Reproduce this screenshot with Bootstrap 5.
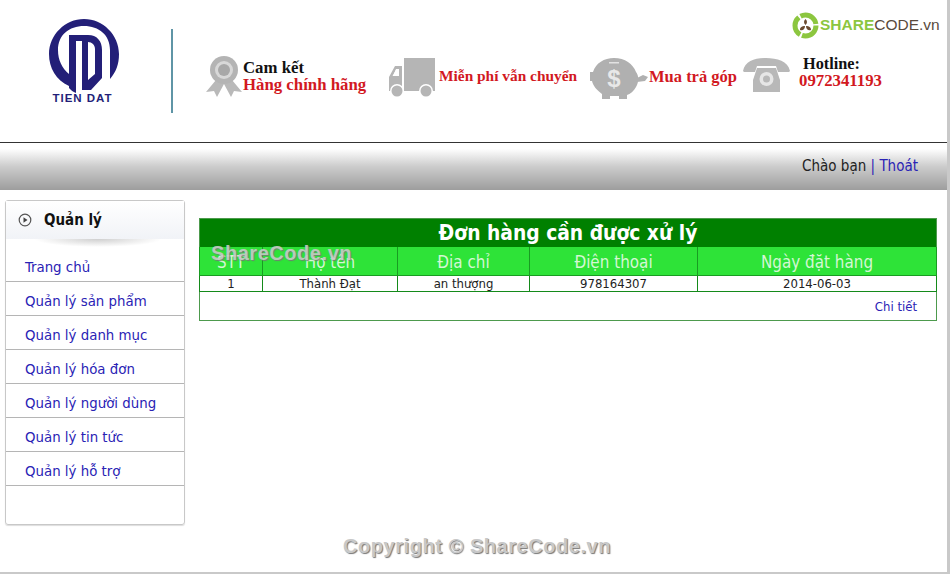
<!DOCTYPE html>
<html lang="vi">
<head>
<meta charset="utf-8">
<title>Đơn hàng cần được xử lý</title>
<link rel="stylesheet" href="https://cdn.jsdelivr.net/npm/bootstrap@5.3.0/dist/css/bootstrap.min.css">
<style>
html,body{height:100%;overflow:hidden}
body{background:#fff;font-family:"DejaVu Sans Condensed","DejaVu Sans",sans-serif;font-size:14px;color:#222}
.pg{width:950px;height:574px;position:relative;border-right:3px solid #c9c9c9;border-bottom:2px solid #c9c9c9}
.top{height:143px;border-bottom:1px solid #333;padding:18px 0 0 48px}
.lg{width:72px;height:87px;flex:none}
.dv{width:2px;height:84px;background:#5f95a6;margin:11px 0 0 51px;flex:none}
.ft{font-family:"Liberation Serif",serif;font-weight:700;color:#d2191f;font-size:15.4px;line-height:17px;white-space:nowrap}
.bl{color:#111}
.ft1{margin:37px 0 0 32px;width:162px;height:43px}
.ft2{margin:39px 0 0 21px;width:189px;height:37px}
.ft3{margin:39px 0 0 13px;width:153px;height:39px;font-size:16.5px}
.ft4{margin:40px 0 0 0;height:36px}
.i1{width:38px;height:43px;flex:none}.i2{width:47px;height:41px;flex:none;margin:0 4px -4px 0;align-self:flex-start}.i3{width:58px;height:43px;flex:none;margin-right:1px;align-self:flex-start}.i4{width:47px;height:34px;flex:none;margin-right:9px}
.big{font-size:16.8px}
.hl{font-size:16.3px;margin:-3px 0 0 4px}
.strip{height:47px;background:linear-gradient(#fff 0,#fff 12%,#ccc 50%,#9d9d9d 100%);padding-right:29px;font-size:15px;color:#222}
.strip a,.side a,.more{color:#2a23b5;text-decoration:none}
.main{padding:10px 9px 0 5px;gap:14px}
.side{width:180px;height:325px;flex:none;border:1px solid #c8c8c8;border-radius:3px;box-shadow:0 1px 1px #ddd}
.shead{height:38px;background:linear-gradient(#fff,#f1f3f7);padding-left:12px;gap:12px;font-weight:700;font-size:15px;color:#111;position:relative}
.shead::after{content:"";position:absolute;left:28px;right:22px;top:38px;height:8px;background:radial-gradient(ellipse at top,#cfcfcf,rgba(255,255,255,0) 70%)}
.side a.it{display:flex;align-items:flex-end;height:34px;padding:0 0 5px 19px;border-bottom:1px solid #b5b5b5;font-size:14.85px;line-height:18px}
.side a.first{height:43px;padding-bottom:5px}
.cnt{flex:1;padding-top:18px}
.tb{width:738px;border-collapse:collapse;border:1px solid #4d9a4d;margin:0;text-align:center;table-layout:fixed}
.tb .h1 th{background:#008000;color:#fff;font-size:20.8px;font-weight:700;height:28px;padding:0;line-height:28px}
.tb .h2 th{background:#2ee338;color:#d4f7d4;font-size:16.9px;font-weight:400;height:28px;padding:2px 0 0;border:1px solid #199c22;border-top:0;line-height:26px}
.tb td{height:16px;padding:0;font-size:13px;line-height:15px;border:1px solid #148a1a;color:#222}
.tb td.ftr{height:29px;border:0;border-top:1px solid #4d9a4d;text-align:right;padding:0 19px 0 0;font-size:13px}
.wm,.cr{position:absolute;font-family:"Liberation Sans",sans-serif;font-weight:700;font-size:20px;letter-spacing:.55px;line-height:24px;color:#c8c8c8;text-shadow:1px 1px 1px #777}
.wm{left:211px;top:241px;opacity:.9}
.cr{left:343px;top:534px}
.sc{position:absolute;left:792px;top:11px;gap:1px;font-family:"Liberation Sans",sans-serif;font-size:15.500px;line-height:28px}
.sc b{color:#8cc63f;font-weight:700}.sc span{color:#5a4a3c;font-weight:400}
.camket{margin-top:4px}
</style>
</head>
<body>
<div class="pg">
  <header class="top d-flex align-items-start">
    <svg class="lg" viewBox="0 0 72 87" aria-hidden="true">
      <path fill="#231f78" d="M21 68C8 62 1 50 1 36 1 17 17 1 36 1s35 16 35 35c0 10-3 18-9 25V32C62 17 51 8 36 8 21 8 10 17 10 32c0 10 4 18 11 24z"/>
      <path fill="#231f78" fill-rule="evenodd" d="M21 17h19c9 0 14 6 14 15v28l-11 12H34V62h6l7-6V31c0-4-3-7-7-7v38h-6V23h-6v52c-3-1-5-3-7-5z"/>
      <text x="34.500" y="84" text-anchor="middle" font-family="Liberation Sans,sans-serif" font-weight="700" font-size="11.500" letter-spacing="1" fill="#231f78">TIEN DAT</text>
    </svg>
    <div class="dv"></div>
    <div class="ft ft1 d-flex">
      <svg class="i1" viewBox="0 0 38 43" aria-hidden="true"><path fill="#b9b9b9" d="M11 25 1 37l8-1 3 6 7-13 7 13 3-6 8 1-10-12z"/><circle cx="19" cy="15" r="14" fill="#b4b4b4"/><circle cx="19" cy="15" r="9" fill="#d8d8d8"/><circle cx="19" cy="15" r="6" fill="#a8a8a8"/></svg>
      <div class="big"><div class="bl camket">Cam kết</div><div>Hàng chính hãng</div></div>
    </div>
    <div class="ft ft2 d-flex align-items-center">
      <svg class="i2" viewBox="0 0 47 41" aria-hidden="true"><path fill="#b5b5b5" d="M16 1h31v33H16zM14 9v25H1V20l6-11zM5 19h6v-7H8z"/><path fill="#fff" d="M4.500 19h6.500v-7H8.500z"/><circle cx="9" cy="34" r="7" fill="#fff"/><circle cx="9" cy="34" r="5.500" fill="#b5b5b5"/><circle cx="38" cy="34" r="7" fill="#fff"/><circle cx="38" cy="34" r="5.500" fill="#b5b5b5"/></svg>
      <span>Miễn phí vẫn chuyển</span>
    </div>
    <div class="ft ft3 d-flex align-items-center">
      <svg class="i3" viewBox="0 0 58 43" aria-hidden="true"><path fill="#b0b0b0" d="M24 1c11 0 19 6 22 14 3 4 3 10 0 15-2 4-6 7-9 8v4h-8v-3h-9v3h-8v-5C7 33 3 29 2 24H0v-9h3C6 6 14 1 24 1z"/><path fill="#b0b0b0" d="m47 21 6-3 5 2-3 4-8 1z"/><path fill="#e2e2e2" d="M19 5h10v1.500H19z"/><text x="24" y="30" text-anchor="middle" font-family="Liberation Sans,sans-serif" font-size="24" fill="#e8e8e8">$</text></svg>
      <span>Mua trả góp</span>
    </div>
    <div class="ft ft4 d-flex">
      <svg class="i4" viewBox="0 0 47 34" aria-hidden="true"><path fill="#b8b8b8" d="M0 13C2 3 12 0 23 0s22 3 24 13l-1 1H35l-2-6H14l-2 6H1zM14 10h19l4 12v12H10V22z"/><circle cx="23.500" cy="21" r="7" fill="#e6e6e6"/><circle cx="23.500" cy="21" r="3.500" fill="#b8b8b8"/></svg>
      <div class="big"><div class="bl hl">Hotline:</div><div>0972341193</div></div>
    </div>
  </header>
  <div class="strip d-flex align-items-center justify-content-end"><span>Chào bạn <a href="#">| Thoát</a></span></div>
  <div class="main d-flex">
    <nav class="side">
      <div class="shead d-flex align-items-center">
        <svg width="14" height="14" viewBox="0 0 14 14" aria-hidden="true"><circle cx="7" cy="7" r="5.800" fill="none" stroke="#555" stroke-width="1.200"/><path fill="#444" d="M5.500 4.300 9.500 7l-4 2.700z"/></svg>
        <span>Quản lý</span>
      </div>
      <a class="it first" href="#">Trang chủ</a>
      <a class="it" href="#">Quản lý sản phẩm</a>
      <a class="it" href="#">Quản lý danh mục</a>
      <a class="it" href="#">Quản lý hóa đơn</a>
      <a class="it" href="#">Quản lý người dùng</a>
      <a class="it" href="#">Quản lý tin tức</a>
      <a class="it" href="#">Quản lý hỗ trợ</a>
    </nav>
    <section class="cnt">
      <table class="tb">
        <colgroup><col style="width:63px"><col style="width:135px"><col style="width:132px"><col style="width:168px"><col></colgroup>
        <thead>
          <tr class="h1"><th colspan="5">Đơn hàng cần được xử lý</th></tr>
          <tr class="h2"><th>STT</th><th>Họ tên</th><th>Địa chỉ</th><th>Điện thoại</th><th>Ngày đặt hàng</th></tr>
        </thead>
        <tbody>
          <tr><td>1</td><td>Thành Đạt</td><td>an thượng</td><td>978164307</td><td>2014-06-03</td></tr>
          <tr><td class="ftr" colspan="5"><a class="more" href="#">Chi tiết</a></td></tr>
        </tbody>
      </table>
    </section>
  </div>
  <div class="wm">ShareCode.vn</div>
  <div class="cr">Copyright © ShareCode.vn</div>
  <div class="sc d-flex align-items-center">
    <svg width="27" height="27" viewBox="0 0 27 27" aria-hidden="true"><circle cx="13.500" cy="13.500" r="10.500" fill="none" stroke="#8cc63f" stroke-width="5" stroke-dasharray="20 2"/><path fill="#6b4a2f" d="M13.500 7c2 2 2 4 0 6-2-2-2-4 0-6zM8 18c0-3 2-4 5-4 0 3-2 5-5 4zm11 0c-3 1-5-1-5-4 3 0 5 1 5 4z"/></svg>
    <div><b>SHARE</b><span>CODE.vn</span></div>
  </div>
</div>
</body>
</html>
